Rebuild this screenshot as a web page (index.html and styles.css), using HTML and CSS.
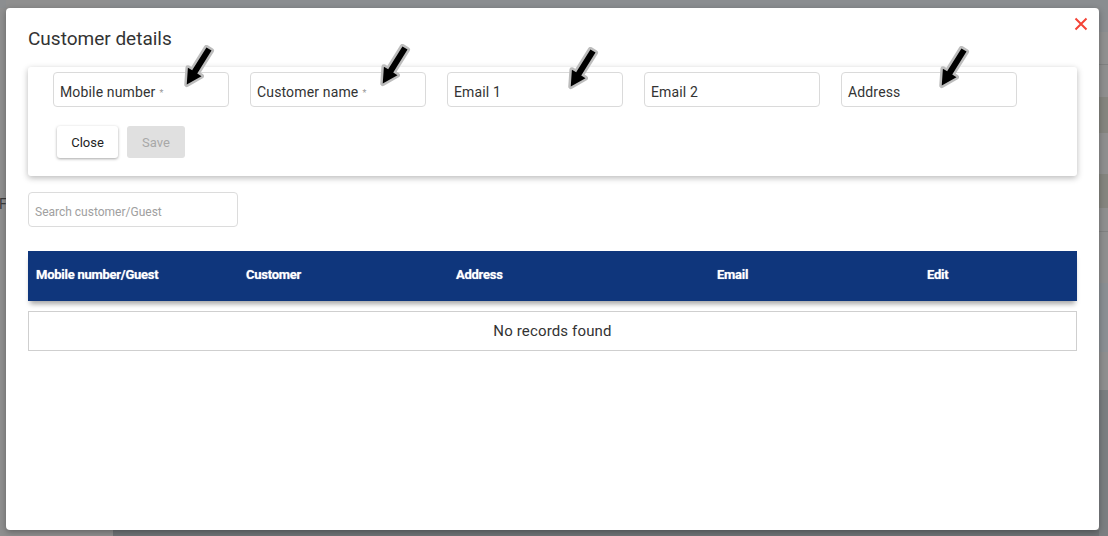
FILE: index.html
```html
<!DOCTYPE html>
<html lang="en">
<head>
<meta charset="utf-8">
<title>Customer details</title>
<link rel="stylesheet" href="styles.css">
</head>
<body>
<div class="page">
  <div class="side-left"><span class="peek">F</span></div>
  <div class="center">
    <div class="top-strip"><div class="ts-a"></div><div class="ts-b"></div></div>
    <div class="center-fill"></div>
    <div class="bottom-strip"><div class="bs-a"></div><div class="bs-b"></div></div>
  </div>
  <div class="side-right"></div>

  <div class="modal">
    <button class="modal-close" aria-label="Close">
      <svg width="14" height="14" viewBox="0 0 14 14"><path d="M1.5 1.5 L12.5 12.5 M12.5 1.5 L1.5 12.5" stroke="#f44336" stroke-width="2" fill="none"/></svg>
    </button>
    <h2 class="modal-title">Customer details</h2>

    <div class="form-card">
      <div class="field-row">
        <div class="field"><span class="field-label">Mobile number</span><span class="req">*</span></div>
        <div class="field"><span class="field-label">Customer name</span><span class="req">*</span></div>
        <div class="field"><span class="field-label">Email 1</span></div>
        <div class="field"><span class="field-label">Email 2</span></div>
        <div class="field"><span class="field-label">Address</span></div>
      </div>
      <div class="actions">
        <button class="btn btn-close">Close</button>
        <button class="btn btn-save" disabled>Save</button>
      </div>
    </div>

    <div class="search"><span class="search-ph">Search customer/Guest</span></div>

    <div class="table">
      <div class="thead">
        <div class="th">Mobile number/Guest</div>
        <div class="th">Customer</div>
        <div class="th">Address</div>
        <div class="th">Email</div>
        <div class="th">Edit</div>
      </div>
      <div class="empty">No records found</div>
    </div>

    <svg class="pointer p1" width="36" height="46" viewBox="0 0 36 46"><g transform="translate(28,4) rotate(32)"><polygon points="-3,0 3,0 3,27 8,27 0,42 -8,27 -3,27" fill="#000" stroke="#bdbdbd" stroke-width="5" stroke-linejoin="round" paint-order="stroke"/></g></svg>
    <svg class="pointer p2" width="36" height="46" viewBox="0 0 36 46"><g transform="translate(28,4) rotate(32)"><polygon points="-3,0 3,0 3,27 8,27 0,42 -8,27 -3,27" fill="#000" stroke="#bdbdbd" stroke-width="5" stroke-linejoin="round" paint-order="stroke"/></g></svg>
    <svg class="pointer p3" width="36" height="46" viewBox="0 0 36 46"><g transform="translate(28,4) rotate(32)"><polygon points="-3,0 3,0 3,27 8,27 0,42 -8,27 -3,27" fill="#000" stroke="#bdbdbd" stroke-width="5" stroke-linejoin="round" paint-order="stroke"/></g></svg>
    <svg class="pointer p4" width="36" height="46" viewBox="0 0 36 46"><g transform="translate(28,4) rotate(32)"><polygon points="-3,0 3,0 3,27 8,27 0,42 -8,27 -3,27" fill="#000" stroke="#bdbdbd" stroke-width="5" stroke-linejoin="round" paint-order="stroke"/></g></svg>
  </div>
</div>
</body>
</html>
```

FILE: styles.css
```css
* { box-sizing: border-box; }

html, body {
  margin: 0;
  padding: 0;
}

body {
  width: 1108px;
  height: 536px;
  overflow: hidden;
  font-family: Roboto, "Liberation Sans", Arial, sans-serif;
  background: #8f8f8f;
}

.page {
  position: relative;
  display: flex;
  width: 1108px;
  height: 536px;
}

/* dimmed page behind the dialog */
.side-left {
  width: 6px;
  flex: none;
  overflow: hidden;
  background: linear-gradient(#8c8e90 0 8px, #8f8f8f 8px);
}

.peek {
  display: block;
  margin-top: 196px;
  font-size: 14px;
  line-height: 16px;
  color: #3a3a3a;
  margin-left: -1px;
}

.center {
  flex: 1;
  display: flex;
  flex-direction: column;
}

.top-strip {
  height: 8px;
  display: flex;
}
.ts-a { width: 104px; background: #8f8f8f; }
.ts-b { flex: 1; background: #8a8d90; }

.center-fill { flex: 1; background: #8f8f8f; }

.bottom-strip {
  height: 6px;
  display: flex;
}
.bs-a { width: 107px; background: #8e8e8e; }
.bs-b { flex: 1; background: #6f7376; }

.side-right {
  width: 9px;
  flex: none;
  background: linear-gradient(
    #8a8d90 0 32px,
    #909090 32px 64px,
    #808181 64px 65px,
    #8f8f8f 65px 97px,
    #85857f 97px 133px,
    #8f8f8f 133px 174px,
    #85857f 174px 208px,
    #8f8f8f 208px 231px,
    #818181 231px 232px,
    #8f8f8f 232px 283px,
    #8a8f93 283px 352px,
    #8f8f8f 352px 390px,
    #7b7e81 390px
  );
}

/* dialog */
.modal {
  position: absolute;
  left: 6px;
  top: 8px;
  width: 1093px;
  height: 522px;
  background: #fff;
  border-radius: 4px;
  box-shadow: 0 2px 6px rgba(0, 0, 0, 0.3);
  padding: 19px 22px 0;
}

.modal-close {
  position: absolute;
  top: 9px;
  right: 11px;
  width: 14px;
  height: 14px;
  padding: 0;
  border: 0;
  background: none;
  display: block;
}
.modal-close svg { display: block; }

.modal-title {
  margin: 0 0 16px;
  font-size: 19px;
  line-height: 24px;
  font-weight: 400;
  color: #333;
}

.form-card {
  background: #fff;
  border-radius: 3px;
  box-shadow: 0 2px 6px rgba(0, 0, 0, 0.28);
  padding: 5px 25px 18px;
}

.field-row {
  display: flex;
  gap: 21px;
}

.field {
  width: 176px;
  height: 35px;
  border: 1px solid #dadada;
  border-radius: 4px;
  display: flex;
  align-items: center;
  padding: 5px 0 0 6px;
  font-size: 14px;
  line-height: 16px;
  letter-spacing: 0.15px;
  color: #333;
}

.req {
  font-size: 9px;
  color: #999;
  margin-left: 4px;
  margin-top: 2px;
}

.actions {
  display: flex;
  gap: 9px;
  margin-top: 19px;
  padding-left: 4px;
}

.btn {
  height: 32px;
  border: 0;
  border-radius: 3px;
  font-family: Roboto, "Liberation Sans", Arial, sans-serif;
  font-size: 13px;
  padding: 0;
}

.btn-close {
  width: 61px;
  background: #fff;
  color: #222;
  box-shadow: 0 1px 3px rgba(0, 0, 0, 0.35);
}

.btn-save {
  width: 58px;
  background: #e0e0e0;
  color: #a8a8a8;
}

.search {
  margin-top: 16px;
  width: 210px;
  height: 35px;
  border: 1px solid #dcdcdc;
  border-radius: 4px;
  display: flex;
  align-items: center;
  padding: 4px 0 0 6px;
}

.search-ph {
  font-size: 12px;
  color: #a0a0a0;
}

.table {
  margin-top: 24px;
}

.thead {
  height: 50px;
  background: #0f367c;
  display: grid;
  grid-template-columns: 210px 210px 261px 210px 1fr;
  align-items: center;
  padding: 0 0 3px 8px;
  box-shadow: 0 5px 5px -2px rgba(0, 0, 0, 0.35);
}

.th {
  color: #fff;
  font-size: 13px;
  font-weight: 700;
  letter-spacing: -0.25px;
  text-shadow: 0 0 1px rgba(255, 255, 255, 0.6);
}

.empty {
  margin-top: 10px;
  height: 40px;
  border: 1px solid #cfcfcf;
  display: flex;
  align-items: center;
  justify-content: center;
  font-size: 15px;
  letter-spacing: 0.15px;
  color: #333;
}

/* annotation arrows overlaid on the dialog */
.pointer {
  position: absolute;
  display: block;
}
.p1 { left: 175px; top: 37px; }
.p2 { left: 371px; top: 36px; }
.p3 { left: 559px; top: 39px; }
.p4 { left: 930px; top: 38px; }
```
